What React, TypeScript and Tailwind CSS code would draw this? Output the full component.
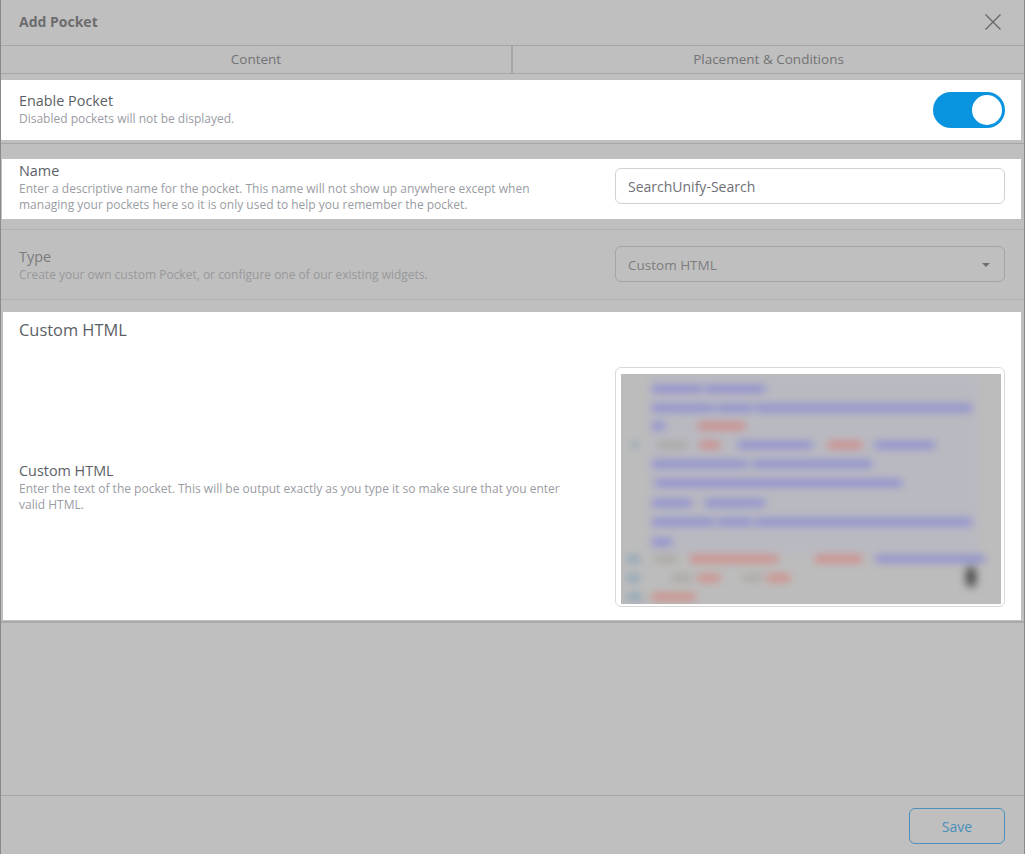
const font = { fontFamily: '"Open Sans", "Noto Sans", sans-serif' };

type Bar = [number, number, number, string];

const BLUE = "#8384d4";
const RED = "#d4827c";
const TEAL = "#84a0b4";
const GREY = "#a8a49c";

// the blurred code screenshot, as coloured dashes that get blurred
const bars: Bar[] = [
  [31, 15, 50, BLUE],
  [84, 15, 60, BLUE],
  [31, 34, 62, BLUE],
  [96, 34, 35, BLUE],
  [134, 34, 217, BLUE],
  [31, 52, 13, BLUE],
  [77, 52, 47, RED],
  [11, 71, 6, TEAL],
  [37, 71, 29, GREY],
  [79, 71, 20, RED],
  [117, 71, 74, BLUE],
  [207, 71, 34, RED],
  [254, 71, 60, BLUE],
  [31, 90, 95, BLUE],
  [131, 90, 120, BLUE],
  [34, 109, 247, BLUE],
  [31, 129, 40, BLUE],
  [84, 129, 60, BLUE],
  [31, 148, 62, BLUE],
  [96, 148, 35, BLUE],
  [134, 148, 217, BLUE],
  [31, 168, 20, BLUE],
  [6, 185, 13, TEAL],
  [34, 185, 22, GREY],
  [69, 185, 88, RED],
  [194, 185, 47, RED],
  [254, 185, 110, BLUE],
  [6, 204, 13, TEAL],
  [51, 204, 20, GREY],
  [77, 204, 22, RED],
  [122, 204, 19, GREY],
  [146, 204, 23, RED],
  [6, 223, 15, TEAL],
  [31, 223, 43, RED],
];

const CodePreview = () => (
  <div className="w-[390px] h-[240px] bg-white border border-[#d9d9d9] rounded-[6px] pl-[5px] pt-[6px]">
    <div className="w-[380px] h-[230px] overflow-hidden bg-[#bcbcbe]">
      <svg width="380" height="230" viewBox="0 0 380 230" className="blur-[4px]">
        <rect x="-10" y="-10" width="400" height="250" fill="#bcbcbc" />
        <rect x="28" y="-10" width="330" height="190" fill="#b9b9c1" />
        {bars.map(([x, y, w, c], i) => (
          <rect key={i} x={x} y={y - 3} width={w} height={6} fill={c} />
        ))}
        <rect x="345" y="193" width="10" height="20" rx="5" fill="#484848" />
      </svg>
    </div>
  </div>
);

const App = () => {
  return (
    <div
      className="w-[1025px] h-[854px] bg-[#bfbfbf] flex flex-col border-x border-[#8a8a8a] overflow-hidden"
      style={font}
    >
      <div className="h-[45px] shrink-0 flex items-center justify-between pl-[18px] pr-[23px] pb-[2px]">
        <h1 className="text-[14px] font-bold text-[#6c6c6e]">Add Pocket</h1>
        <svg width="16" height="16" viewBox="0 0 16 16" fill="none" stroke="#666" strokeWidth="1.3">
          <path d="M0.5 0.5 L15.5 15.5 M15.5 0.5 L0.5 15.5" />
        </svg>
      </div>

      <div className="h-[29px] shrink-0 flex border-y border-[#a6a6a8]">
        <div className="w-[512px] flex items-center justify-center text-[13.5px] text-[#737375] border-r-2 border-[#a6a6a8]">
          Content
        </div>
        <div className="flex-1 flex items-center justify-center text-[13.5px] text-[#737375]">
          Placement &amp; Conditions
        </div>
      </div>

      <div className="mt-[6px] h-[60px] shrink-0 bg-white flex items-center justify-between pl-[18px] pr-[16px] mr-[3px]">
        <div className="pb-[2px]">
          <div className="text-[14.4px] leading-[18px] text-[#5c5f66] mb-[1px]">Enable Pocket</div>
          <div className="text-[12px] leading-[16px] text-[#9a9ca3]">Disabled pockets will not be displayed.</div>
        </div>
        <div className="w-[72px] h-[36px] rounded-full bg-[#0a94df] p-[3px] flex justify-end">
          <div className="w-[30px] h-[30px] rounded-full bg-white" />
        </div>
      </div>

      <div className="mt-[3px] h-[16px] shrink-0 border-t border-[#a6a6a8]" />

      <div className="h-[60px] shrink-0 bg-white flex items-start justify-between ml-[1px] pl-[17px] pr-[16px] mr-[3px]">
        <div className="w-[540px] pt-[3px]">
          <div className="text-[14.4px] leading-[18px] text-[#5c5f66] mb-[1px]">Name</div>
          <div className="text-[12px] leading-[16px] text-[#9a9ca3]">
            Enter a descriptive name for the pocket. This name will not show up anywhere except when managing your pockets here so it is only used to help you remember the pocket.
          </div>
        </div>
        <div className="mt-[9px] w-[390px] h-[36px] border border-[#d2d2d2] rounded-[6px] flex items-center px-[12px] text-[14px] text-[#6e7076]">
          SearchUnify-Search
        </div>
      </div>

      <div className="mt-[10px] h-[71px] shrink-0 border-y border-[#b0b0b2] flex items-center justify-between pl-[18px] pr-[19px]">
        <div className="pt-[2px]">
          <div className="text-[14.4px] leading-[18px] text-[#7b7b7d] mb-[1px]">Type</div>
          <div className="text-[12px] leading-[16px] text-[#98989b]">
            Create your own custom Pocket, or configure one of our existing widgets.
          </div>
        </div>
        <div className="mb-[2px] w-[390px] h-[36px] border border-[#a4a4a8] rounded-[6px] flex items-center justify-between pl-[12px] pr-[14px] pt-[3px] text-[13.5px] text-[#7e7e80]">
          Custom HTML
          <span className="w-0 h-0 border-x-[4px] border-x-transparent border-t-[4px] border-t-[#6e6e70]" />
        </div>
      </div>

      <div className="mt-[12px] h-[308px] shrink-0 bg-white ml-[2px] mr-[3px] pl-[16px] pr-[16px] flex flex-col">
        <h2 className="text-[16.4px] leading-[22px] font-medium text-[#5c5f66] mt-[7px]">Custom HTML</h2>
        <div className="flex items-center justify-between mt-[26px]">
          <div className="w-[550px] pt-[1px]">
            <div className="text-[14.4px] leading-[18px] text-[#5c5f66] mb-[1px]">Custom HTML</div>
            <div className="text-[12px] leading-[16px] text-[#9a9ca3]">
              Enter the text of the pocket. This will be output exactly as you type it so make sure that you enter valid HTML.
            </div>
          </div>
          <CodePreview />
        </div>
      </div>

      <div className="mt-[1px] flex-1 border-t-2 border-[#a9a9ab]" />

      <div className="h-[59px] shrink-0 border-t border-[#a6a6a8] flex items-start justify-end pt-[12px] pr-[19px]">
        <button className="w-[96px] h-[36px] border border-[#4a90bb] rounded-[6px] text-[14px] text-[#4a90bb]">
          Save
        </button>
      </div>
    </div>
  );
};

export default App;
